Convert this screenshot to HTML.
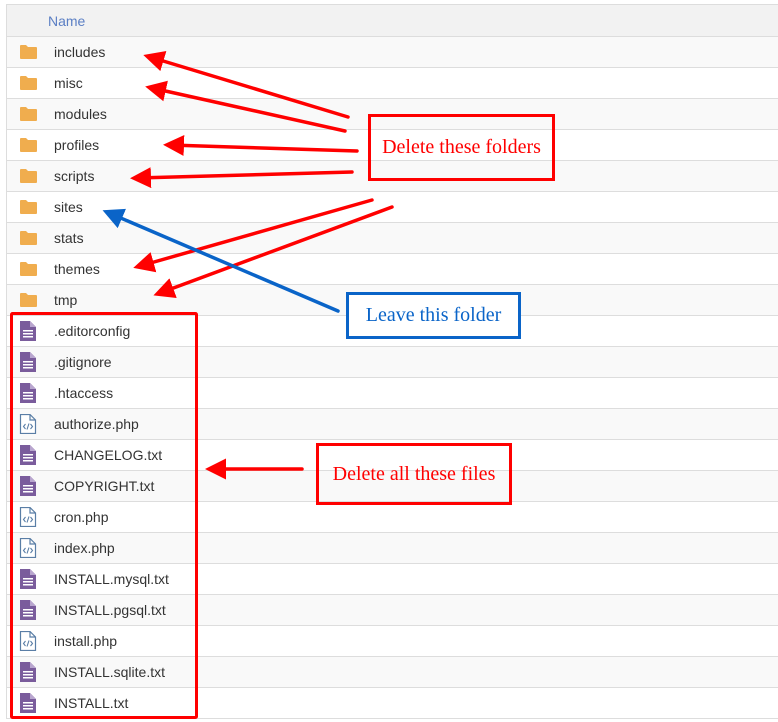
<!DOCTYPE html>
<html><head><style>
body{margin:0;width:778px;height:722px;background:#fff;position:relative;overflow:hidden;font-family:"Liberation Sans",Arial,sans-serif;}
.tbl{position:absolute;left:6px;top:4px;width:772px;border-left:1px solid #ddd;border-top:1px solid #ddd;}
.hd{height:31px;background:#f2f2f2;border-bottom:1px solid #ddd;color:#5b7fc4;font-size:14px;line-height:33px;padding-left:41px;}
.r{height:30px;border-bottom:1px solid #ddd;position:relative;font-size:14px;line-height:30px;color:#333;}
.r:nth-child(even){background:#f9f9f9;}
.r span{position:absolute;left:47px;}
.r svg{position:absolute;left:12px;top:6px;}
.box{position:absolute;font-family:"Liberation Serif",serif;font-size:20px;box-sizing:border-box;text-align:center;}
</style></head><body>
<div class="tbl">
<div class="hd">Name</div>
<div id="rows"></div>
</div>
<svg style="position:absolute;left:0;top:0" width="778" height="722">
<defs>
<marker id="ar" markerWidth="6" markerHeight="6" refX="4" refY="3" orient="auto" markerUnits="strokeWidth"><path d="M0,0 L6,3 L0,6 z" fill="#f00"/></marker>
<marker id="ab" markerWidth="6" markerHeight="6" refX="4" refY="3" orient="auto" markerUnits="strokeWidth"><path d="M0,0 L6,3 L0,6 z" fill="#0a64c8"/></marker>
</defs>
<g stroke="#f00" stroke-width="3.5" stroke-linecap="round" marker-end="url(#ar)">
<line x1="348" y1="117" x2="150" y2="57"/>
<line x1="345" y1="131" x2="152" y2="88"/>
<line x1="357" y1="151" x2="170" y2="145"/>
<line x1="352" y1="172" x2="137" y2="178"/>
<line x1="372" y1="200" x2="140" y2="266"/>
<line x1="392" y1="207" x2="160" y2="293"/>
<line x1="302" y1="469" x2="212" y2="469"/>
</g>
<line x1="338" y1="311" x2="109" y2="213" stroke="#0a64c8" stroke-width="3.5" stroke-linecap="round" marker-end="url(#ab)"/>
<rect x="11.5" y="313.5" width="185" height="404" fill="none" stroke="#f00" stroke-width="3" rx="1"/>
</svg>
<div class="box" style="left:368px;top:114px;width:187px;height:67px;border:3px solid #f00;color:#f00;line-height:61px;">Delete these folders</div>
<div class="box" style="left:346px;top:292px;width:175px;height:47px;border:3px solid #0a64c8;color:#0a64c8;background:#fff;line-height:41px;">Leave this folder</div>
<div class="box" style="left:316px;top:443px;width:196px;height:62px;border:3px solid #f00;color:#f00;line-height:56px;">Delete all these files</div>
<script>
var F='<svg width="20" height="18" style="top:7px"><path d="M1 2 Q1 1 2 1 H7 L9 3 H17 Q18 3 18 4 V14 Q18 15 17 15 H2 Q1 15 1 14 Z" fill="#f0ad4e"/></svg>';
var T='<svg width="20" height="20" style="top:5px"><path d="M1 0 H11 L17 6 V20 H1 Z" fill="#7a5c9c"/><path d="M11 0 V6 H17" fill="#b9a6cf"/><rect x="4" y="9" width="10" height="1.5" fill="#fff"/><rect x="4" y="12" width="10" height="1.5" fill="#fff"/><rect x="4" y="15" width="10" height="1.5" fill="#fff"/></svg>';
var P='<svg width="20" height="20" style="top:5px"><path d="M1.5 0.5 H11 L16.5 6 V19.5 H1.5 Z M11 0.5 V6 H16.5" fill="#fff" stroke="#5a7ea6" stroke-width="1.2"/><path d="M6.5 10 L4.5 12.5 L6.5 15 M11.5 10 L13.5 12.5 L11.5 15 M10 9.5 L8 15.5" fill="none" stroke="#5a7ea6" stroke-width="1.1"/></svg>';
var d=[['includes',F],['misc',F],['modules',F],['profiles',F],['scripts',F],['sites',F],['stats',F],['themes',F],['tmp',F],['.editorconfig',T],['.gitignore',T],['.htaccess',T],['authorize.php',P],['CHANGELOG.txt',T],['COPYRIGHT.txt',T],['cron.php',P],['index.php',P],['INSTALL.mysql.txt',T],['INSTALL.pgsql.txt',T],['install.php',P],['INSTALL.sqlite.txt',T],['INSTALL.txt',T]];
var h='';d.forEach(function(x){h+='<div class="r">'+x[1]+'<span>'+x[0]+'</span></div>';});
document.getElementById('rows').outerHTML=h;
</script>
</body></html>
